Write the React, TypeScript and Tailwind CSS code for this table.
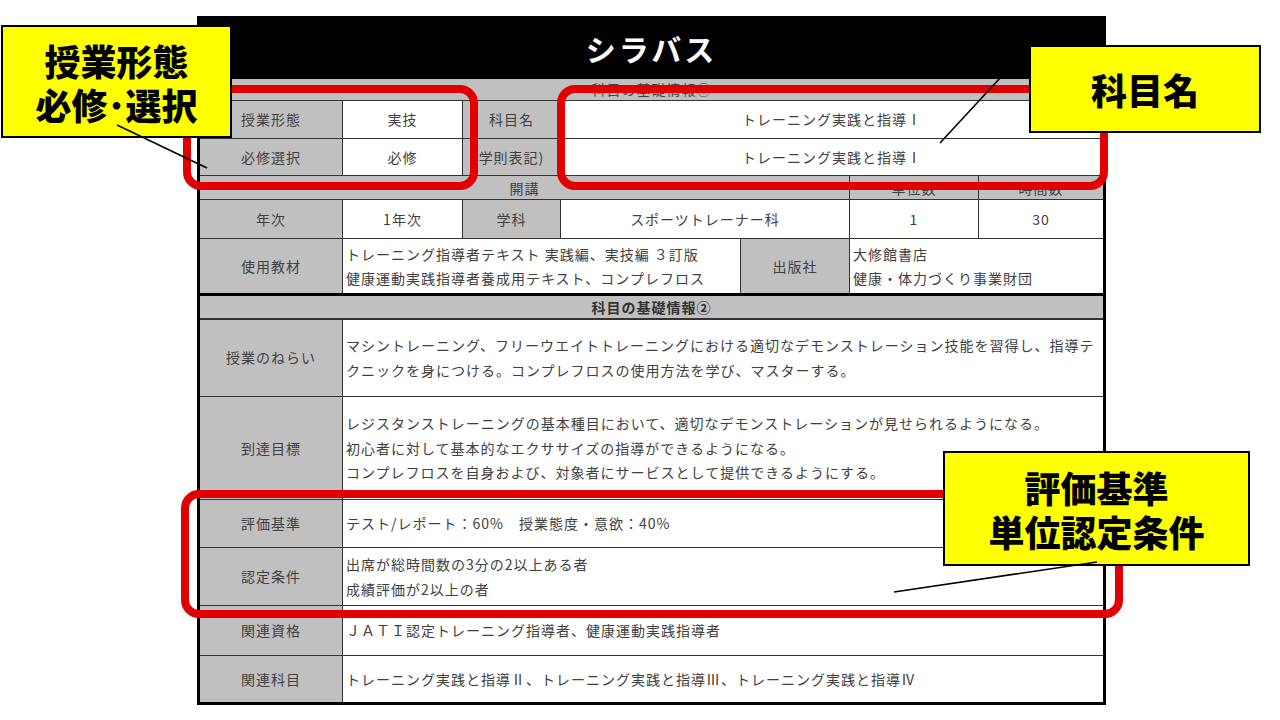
import React from 'react'

const font = { fontFamily: '"Noto Sans CJK JP", "Noto Sans", sans-serif' }

const cell = 'border border-[#333] px-[3px] align-middle'
const label = `${cell} bg-[#c0c0c0] text-center`
const value = `${cell} bg-white`
const centerValue = `${cell} bg-white text-center`

function Syllabus() {
  return (
    <table
      className="ml-[197px] mt-[16px] w-[909px] table-fixed border-collapse border-[3px] border-black text-[14px] leading-[25px] tracking-[1px] text-[#404040]"
      style={font}
    >
      <colgroup>
        <col className="w-[144px]" />
        <col className="w-[120px]" />
        <col className="w-[98px]" />
        <col className="w-[180px]" />
        <col className="w-[109px]" />
        <col className="w-[129px]" />
        <col className="w-[126px]" />
      </colgroup>
      <tbody>
        <tr className="h-[61px]">
          <td colSpan={7} className="bg-black text-center text-[30px] font-bold tracking-[3px] text-white">
            シラバス
          </td>
        </tr>
        <tr className="h-[22px]">
          <td colSpan={7} className="border-b border-[#333] bg-[#c0c0c0] text-center leading-[18px]">
            科目の基礎情報①
          </td>
        </tr>
        <tr className="h-[38px]">
          <td className={label}>授業形態</td>
          <td className={centerValue}>実技</td>
          <td className={label}>科目名</td>
          <td colSpan={4} className={centerValue}>トレーニング実践と指導Ⅰ</td>
        </tr>
        <tr className="h-[37px]">
          <td className={label}>必修選択</td>
          <td className={centerValue}>必修</td>
          <td className={label}>学則表記)</td>
          <td colSpan={4} className={centerValue}>トレーニング実践と指導Ⅰ</td>
        </tr>
        <tr className="h-[24px]">
          <td colSpan={5} className={`${label} leading-[20px]`}>開講</td>
          <td className={`${label} leading-[20px]`}>単位数</td>
          <td className={`${label} leading-[20px]`}>時間数</td>
        </tr>
        <tr className="h-[39px]">
          <td className={label}>年次</td>
          <td className={centerValue}>1年次</td>
          <td className={label}>学科</td>
          <td colSpan={2} className={centerValue}>スポーツトレーナー科</td>
          <td className={centerValue}>1</td>
          <td className={centerValue}>30</td>
        </tr>
        <tr className="h-[56px]">
          <td className={`${label} border-b-[3px] border-b-black`}>使用教材</td>
          <td colSpan={3} className={`${value} border-b-[3px] border-b-black leading-[24px]`}>
            トレーニング指導者テキスト 実践編、実技編 ３訂版
            <br />
            健康運動実践指導者養成用テキスト、コンプレフロス
          </td>
          <td className={`${label} border-b-[3px] border-b-black`}>出版社</td>
          <td colSpan={2} className={`${value} border-b-[3px] border-b-black leading-[24px]`}>
            大修館書店
            <br />
            健康・体力づくり事業財団
          </td>
        </tr>
        <tr className="h-[24px]">
          <td colSpan={7} className="border-b-2 border-[#333] bg-[#c0c0c0] text-center font-bold leading-[20px] text-[#333]">
            科目の基礎情報②
          </td>
        </tr>
        <tr className="h-[78px]">
          <td className={label}>授業のねらい</td>
          <td colSpan={6} className={`${value} whitespace-nowrap`}>
            マシントレーニング、フリーウエイトトレーニングにおける適切なデモンストレーション技能を習得し、指導テ
            <br />
            クニックを身につける。コンプレフロスの使用方法を学び、マスターする。
          </td>
        </tr>
        <tr className="h-[103px]">
          <td className={label}>到達目標</td>
          <td colSpan={6} className={`${value} whitespace-nowrap leading-[24.5px]`}>
            レジスタンストレーニングの基本種目において、適切なデモンストレーションが見せられるようになる。
            <br />
            初心者に対して基本的なエクササイズの指導ができるようになる。
            <br />
            コンプレフロスを自身および、対象者にサービスとして提供できるようにする。
          </td>
        </tr>
        <tr className="h-[48px]">
          <td className={label}>評価基準</td>
          <td colSpan={6} className={value}>テスト/レポート：60%　授業態度・意欲：40%</td>
        </tr>
        <tr className="h-[58px]">
          <td className={label}>認定条件</td>
          <td colSpan={6} className={value}>
            出席が総時間数の3分の2以上ある者
            <br />
            成績評価が2以上の者
          </td>
        </tr>
        <tr className="h-[50px]">
          <td className={label}>関連資格</td>
          <td colSpan={6} className={value}>ＪＡＴＩ認定トレーニング指導者、健康運動実践指導者</td>
        </tr>
        <tr className="h-[48px]">
          <td className={label}>関連科目</td>
          <td colSpan={6} className={value}>
            トレーニング実践と指導Ⅱ、トレーニング実践と指導Ⅲ、トレーニング実践と指導Ⅳ
          </td>
        </tr>
      </tbody>
    </table>
  )
}

const calloutText = 'flex flex-col items-center justify-center border-2 border-black bg-[#ffff00] text-[36px] font-black leading-[44px] text-black'

export default function App() {
  return (
    <div className="relative h-[720px] w-[1280px] overflow-hidden bg-white">
      <Syllabus />

      {/* red highlight frames */}
      <div className="absolute left-[183px] top-[85px] h-[105px] w-[295px] rounded-[18px] border-[8px] border-[#e00000]" />
      <div className="absolute left-[557px] top-[85px] h-[105px] w-[551px] rounded-[18px] border-[8px] border-[#e00000]" />
      <div className="absolute left-[181px] top-[490px] h-[128px] w-[942px] rounded-[18px] border-[8px] border-[#e00000]" />

      {/* yellow callouts */}
      <div className={`absolute left-[1px] top-[25px] h-[113px] w-[231px] ${calloutText}`} style={font}>
        <span>授業形態</span>
        <span>必修･選択</span>
      </div>
      <div className={`absolute left-[1029px] top-[45px] h-[88px] w-[232px] ${calloutText}`} style={font}>
        <span>科目名</span>
      </div>
      <div className={`absolute left-[943px] top-[451px] h-[115px] w-[307px] ${calloutText}`} style={font}>
        <span>評価基準</span>
        <span>単位認定条件</span>
      </div>

      <svg className="pointer-events-none absolute left-0 top-0" width="1280" height="720">
        <line x1="117" y1="125" x2="207" y2="168" stroke="black" strokeWidth="1.6" />
        <line x1="1026" y1="50" x2="940" y2="143" stroke="black" strokeWidth="1.6" />
        <line x1="1097" y1="562" x2="894" y2="592" stroke="black" strokeWidth="1.6" />
      </svg>
    </div>
  )
}
